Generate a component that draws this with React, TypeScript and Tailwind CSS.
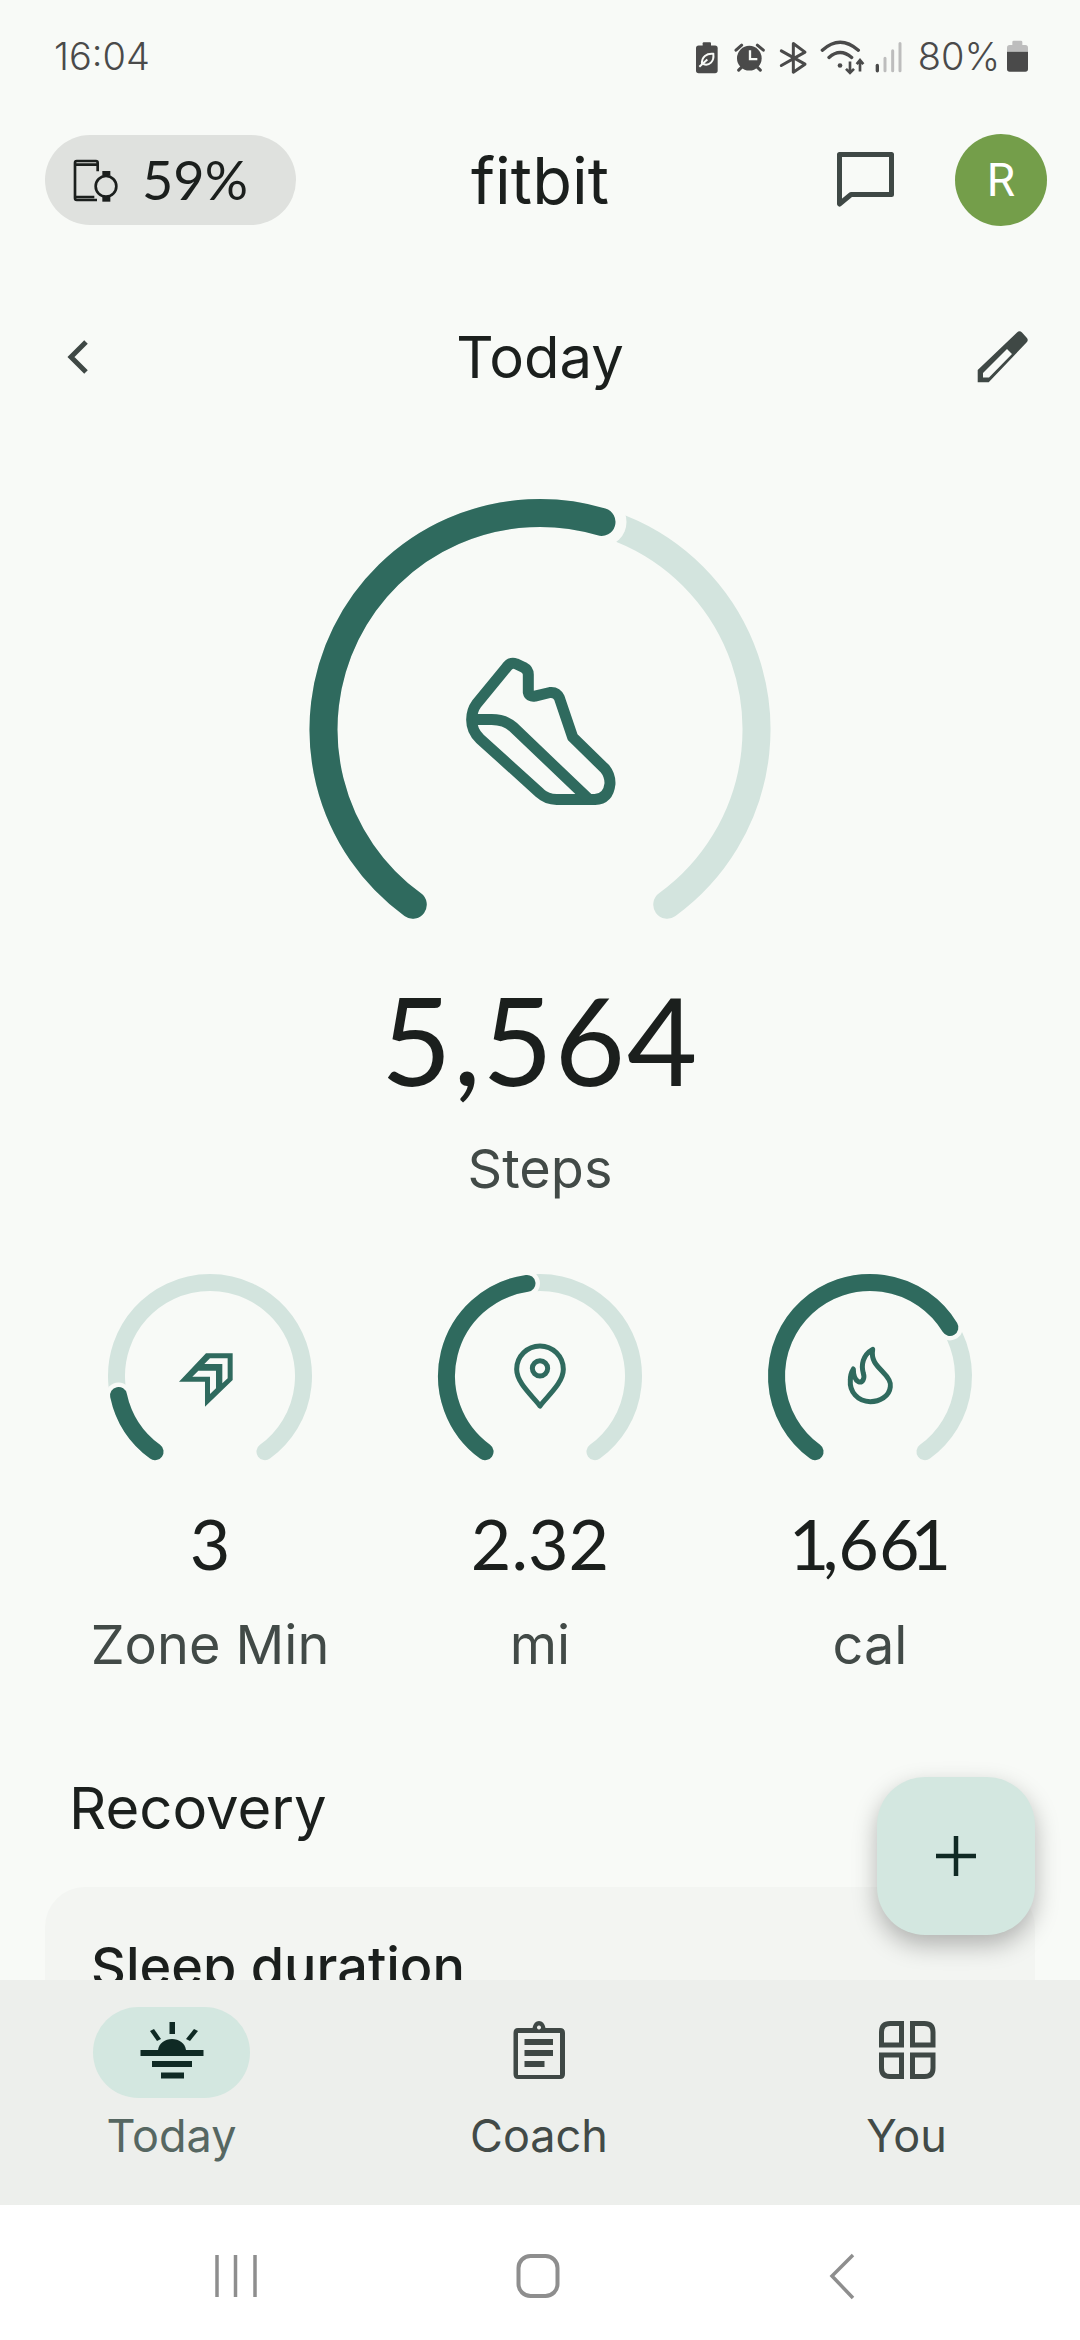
const DARK = "#2f6a5e";
const PALE = "#d3e4de";
const PAGE = "#f8faf7";

function polar(cx: number, cy: number, r: number, deg: number) {
  const a = (deg * Math.PI) / 180;
  return [cx + r * Math.sin(a), cy - r * Math.cos(a)];
}

function arc(cx: number, cy: number, r: number, from: number, to: number) {
  const [x1, y1] = polar(cx, cy, r, from);
  const [x2, y2] = polar(cx, cy, r, to);
  const sweep = ((to - from) % 360 + 360) % 360;
  const large = sweep > 180 ? 1 : 0;
  return `M${x1} ${y1}A${r} ${r} 0 ${large} 1 ${x2} ${y2}`;
}

// start is always 216deg clockwise from the top, track runs to 504 (144)
function Ring({ cx, cy, r, sw, end, gap, width, height, children }: {
  cx: number; cy: number; r: number; sw: number; end: number; gap: number; width: number; height: number; children: React.ReactNode;
}) {
  const [ex, ey] = polar(cx, cy, r, end);
  return (
    <svg width={width} height={height} viewBox={`0 0 ${width} ${height}`} fill="none" className="block mx-auto">
      <path d={arc(cx, cy, r, 216, 504)} stroke={PALE} strokeWidth={sw} strokeLinecap="round" />
      <circle cx={ex} cy={ey} r={sw / 2 + gap} fill={PAGE} />
      <path d={arc(cx, cy, r, 216, end)} stroke={DARK} strokeWidth={sw} strokeLinecap="round" />
      {children}
    </svg>
  );
}

function StatusIcons() {
  return (
    <svg width="207" height="37" viewBox="108 50 621 110" fill="none">
      <rect x="108" y="72" width="65" height="83" rx="8" fill="#4a4a4a" />
      <rect x="128" y="62" width="25" height="14" rx="3" fill="#4a4a4a" />
      <path d="M126 128C124 106 140 95 160 97C163 120 148 134 130 128M118 136L142 114" stroke={PAGE} strokeWidth="6" />
      <circle cx="268" cy="110" r="37" fill="#4a4a4a" />
      <path d="M270 86V113H292" stroke={PAGE} strokeWidth="7" />
      <path d="M228 86L245 71M292 71L310 86M236 146L246 136M301 146L291 136" stroke="#4a4a4a" strokeWidth="9" strokeLinecap="round" />
      <path d="M364 88L435 128L400 152V66L435 92L364 132" stroke="#4a4a4a" strokeWidth="9" strokeLinejoin="round" strokeLinecap="round" />
      <path d="M487 86Q540 38 595 86M507 108Q540 78 575 108" stroke="#4a4a4a" strokeWidth="10" strokeLinecap="round" />
      <circle cx="540" cy="132" r="7" fill="#4a4a4a" />
      <path d="M570 120V152M558 142L570 154L582 142M600 150V118M590 128L600 116L610 128" stroke="#4a4a4a" strokeWidth="8" />
      <path d="M652 132V148" stroke="#4a4a4a" strokeWidth="10" strokeLinecap="round" />
      <path d="M675 110V148M698 88V148M720 66V148" stroke="#bdbdbd" strokeWidth="9" strokeLinecap="round" />
    </svg>
  );
}

function Battery() {
  return (
    <svg width="21" height="32" viewBox="1042 60 63 96">
      <rect x="1058" y="62" width="30" height="20" rx="4" fill="#bdbdbd" />
      <path d="M1042 95V83a8 8 0 0 1 8-8h47a8 8 0 0 1 8 8v12z" fill="#bdbdbd" />
      <path d="M1042 95h63v52a8 8 0 0 1-8 8h-47a8 8 0 0 1-8-8z" fill="#4a4a4a" />
    </svg>
  );
}

function WatchIcon() {
  return (
    <svg width="50" height="45" viewBox="120 110 150 135" fill="none" stroke="#1b1f1d" strokeWidth="8">
      <path d="M200 150V124Q200 119 195 119H137Q132 119 132 124V231Q132 236 137 236H198M132 130H200M132 227H190" />
      <circle cx="225" cy="195" r="31" />
      <rect x="214" y="149" width="24" height="14" fill="#1b1f1d" stroke="none" />
      <rect x="214" y="226" width="24" height="15" fill="#1b1f1d" stroke="none" />
    </svg>
  );
}

function StatCol({ end, value, label, children }: { end: number; value: React.ReactNode; label: string; children: React.ReactNode }) {
  return (
    <div className="flex flex-col items-center">
      <Ring cx={110} cy={112} r={93.5} sw={17} end={end} gap={4.5} width={220} height={200}>
        {children}
      </Ring>
      <div className="mt-[39px] h-[80px] leading-[80px] font-['Lato',sans-serif] text-[70px] text-[#1b1f1d]">{value}</div>
      <div className="mt-[32px] h-[60px] leading-[60px] text-[54px] text-[#424a47]">{label}</div>
    </div>
  );
}

function NavItem({ label, active, children }: { label: string; active?: boolean; children: React.ReactNode }) {
  return (
    <div className="w-[157px] flex flex-col items-center">
      <div className={`w-[157px] h-[91px] pb-[6px] rounded-full flex items-center justify-center ${active ? "bg-[#d3e7e0]" : ""}`}>
        {children}
      </div>
      <div className={`mt-[8px] h-[60px] leading-[60px] text-[45px] ${active ? "text-[#566762]" : "text-[#424a47]"}`}>{label}</div>
    </div>
  );
}

export default function App() {
  return (
    <div className="relative w-full h-[2340px] overflow-hidden flex flex-col bg-white font-['Inter',sans-serif]">
      <div className="h-[1980px] overflow-hidden bg-[#f8faf7]">
        {/* status bar */}
        <div className="h-[112px] flex items-center justify-between pl-[54px] pr-[52px] font-light text-[38px] text-[#4a4a4a]">
          <span>16:04</span>
          <div className="flex items-center">
            <StatusIcons />
            <span className="ml-[15px] mr-[7px]">80%</span>
            <Battery />
          </div>
        </div>

        {/* top bar */}
        <div className="mt-[22px] h-[90px] grid grid-cols-[1fr_auto_1fr] items-center px-[33px]">
          <div className="pl-[12px]">
            <div className="w-[251px] h-[90px] rounded-full bg-[#dfe1de] flex items-center pl-[26px] text-[#1b1f1d]">
              <WatchIcon />
              <span className="ml-[21px] font-['Lato',sans-serif] text-[54px] leading-none">59%</span>
            </div>
          </div>
          <div className="text-[65px] leading-none text-[#1b1f1d]">fitbit</div>
          <div className="flex items-center justify-end">
            <svg width="62" height="60" viewBox="0 0 62 60" fill="none">
              <path d="M4.5 4.5H56.5V44.5H16L4.5 54Z" stroke="#3f4845" strokeWidth="5" strokeLinejoin="round" />
            </svg>
            <div className="ml-[58px] w-[92px] h-[92px] rounded-full bg-[#749e4a] flex items-center justify-center font-['Roboto',sans-serif] text-[46px] text-white">
              R
            </div>
          </div>
        </div>

        {/* title row */}
        <div className="mt-[83px] h-[100px] grid grid-cols-[1fr_auto_1fr] items-center px-[50px]">
          <div className="pl-[16px]">
            <svg width="24" height="36" viewBox="0 0 24 36" fill="none">
              <path d="M20 3L5 18L20 33" stroke="#3f4845" strokeWidth="5" />
            </svg>
          </div>
          <div className="text-[58px] leading-none text-[#1b1f1d]">Today</div>
          <div className="flex justify-end">
            <svg width="54" height="56" viewBox="0 0 54 56">
              <path
                fillRule="evenodd"
                d="M1.7 53.3V41L41 3.5Q43.5 1 46 3.5L50.5 8.5Q53 11 50.5 13.5L12.7 53.3ZM7 44V48.5H13L36 25L31 20Z"
                fill="#3f4845"
              />
            </svg>
          </div>
        </div>

        {/* steps */}
        <div className="mt-[83px]">
          <Ring cx={240} cy={239.5} r={216.5} sw={28} end={16.5} gap={11} width={480} height={440}>
            <g transform="translate(-20 -19.5) scale(0.3333)" stroke={DARK} strokeWidth="33" strokeLinejoin="round">
              <path d="M680 590Q692 574 708 580L730 590Q745 598 745 612V665Q748 680 765 677L810 666Q830 664 838 682L878 800L975 895Q991 915 990 940Q985 985 945 987H830Q800 987 780 968L600 805Q575 782 575 748Q575 720 590 700Z" />
              <path d="M578 747H635Q675 747 700 770L925 985" />
            </g>
          </Ring>
          <div className="mt-[49px] h-[120px] leading-[120px] text-center font-['Lato',sans-serif] text-[122px] tracking-[1.5px] text-[#1b1f1d]">5,564</div>
          <div className="mt-[40px] h-[60px] leading-[60px] text-center text-[54px] text-[#424a47]">Steps</div>
        </div>

        {/* small stats */}
        <div className="mt-[65px] px-[45px] grid grid-cols-3">
          <StatCol end={258} value="3" label="Zone Min">
            <g transform="translate(60 56) scale(0.3333)" fill={DARK}>
              <path
                fillRule="evenodd"
                d="M138 100H218V180L135 260V185H57ZM150 115L133 132H187V190L203 175V115ZM115 152L97 170H150V222L168 205V152Z"
              />
            </g>
          </StatCol>
          <StatCol end={352} value="2.32" label="mi">
            <g transform="translate(60 56) scale(0.3333)" fill="none" stroke={DARK} strokeWidth="15" strokeLinejoin="round">
              <path d="M150 258C130 230 80 190 80 148A70 70 0 0 1 220 148C220 190 170 230 150 258Z" />
              <circle cx="150" cy="145" r="23" />
            </g>
          </StatCol>
          <StatCol
            end={58.7}
            value={
              <>
                <span className="tracking-[-7px]">1</span>,6<span className="tracking-[-9px]">6</span>1
              </>
            }
            label="cal"
          >
            <g transform="translate(61 56) scale(0.3333)" fill="none" stroke={DARK} strokeWidth="15" strokeLinejoin="round">
              <path d="M155 88C150 120 165 135 185 155C205 175 210 190 208 200C205 230 175 245 148 245C110 245 85 215 88 180C88 165 92 155 97 147C97 165 100 178 112 185C125 190 132 175 127 160C120 135 125 105 155 88Z" />
            </g>
          </StatCol>
        </div>

        {/* recovery */}
        <div className="mt-[98px] ml-[69px] h-[70px] leading-[70px] text-[58px] text-[#1b1f1d]">Recovery</div>
        <div className="mt-[44px] mx-[45px] h-[300px] rounded-[40px] bg-[#f3f5f2] pt-[50px] pl-[46px]">
          <div className="h-[60px] leading-[60px] text-[54px] font-medium text-[#1b1f1d]">Sleep duration</div>
        </div>
      </div>

      {/* add button */}
      <div className="absolute left-[877px] top-[1777px] w-[158px] h-[158px] rounded-[48px] bg-[#d3e7e0] shadow-[0_10px_24px_rgba(0,0,0,0.28)] flex items-center justify-center">
        <svg width="42" height="42" viewBox="0 0 42 42">
          <path d="M21 1V41M1 21H41" stroke="#0f2a24" strokeWidth="4.5" />
        </svg>
      </div>

      {/* bottom nav */}
      <div className="h-[225px] bg-[#edefec] flex justify-between pl-[93px] pr-[95px] pt-[27px]">
        <NavItem label="Today" active>
          <svg width="64" height="58" viewBox="140 2020 64 58" fill="#0f2a24">
            <rect x="169.5" y="2021" width="5.5" height="12" />
            <path d="M150 2030L154 2028L161 2038L157 2040Z" />
            <path d="M194 2028L198 2030L190 2040L186 2038Z" />
            <path d="M158 2049C159 2042 165 2038 172 2038C179 2038 185 2042 186 2049Z" />
            <rect x="140.5" y="2049" width="63" height="6" />
            <rect x="152" y="2060" width="40" height="6" />
            <rect x="161" y="2071.5" width="23" height="6" />
          </svg>
        </NavItem>
        <NavItem label="Coach">
          <svg width="52" height="60" viewBox="513 2019 52 60">
            <path
              fillRule="evenodd"
              d="M518 2027H532.5Q534 2020 539 2020Q544 2020 545.5 2027H560Q565 2027 565 2032V2073Q565 2078 560 2078H518Q513.5 2078 513.5 2073V2032Q513.5 2027 518 2027ZM518 2032V2074H560V2032ZM539 2024.5a2 2 0 1 0 .01 0Z"
              fill="#3f4845"
            />
            <rect x="524.5" y="2038" width="28.5" height="6" fill="#3f4845" />
            <rect x="524.5" y="2049" width="28.5" height="6" fill="#3f4845" />
            <rect x="524.5" y="2060" width="20" height="6" fill="#3f4845" />
          </svg>
        </NavItem>
        <NavItem label="You">
          <svg width="58" height="60" viewBox="878 2022 58 60" fill="none" stroke="#3f4845" strokeWidth="5">
            <path d="M881.5 2047V2034Q881.5 2025.5 890 2025.5H901.5V2047Z" />
            <path d="M912.5 2025.5H924.5Q933 2025.5 933 2034V2047H912.5Z" />
            <path d="M881.5 2057H901.5V2078.5H890Q881.5 2078.5 881.5 2070Z" />
            <path d="M912.5 2057H933V2070Q933 2078.5 924.5 2078.5H912.5Z" />
          </svg>
        </NavItem>
      </div>

      {/* system nav */}
      <div className="flex-1 bg-white flex items-center relative">
        <svg width="1080" height="135" viewBox="0 2205 1080 135" fill="none" stroke="#8e8e8e">
          <path d="M217 2255V2297M235.5 2255V2297M255 2255V2297" strokeWidth="3.5" />
          <rect x="518.5" y="2256" width="39" height="40" rx="12" strokeWidth="4" />
          <path d="M853 2255L832 2276L853 2298" strokeWidth="3.5" />
        </svg>
      </div>
    </div>
  );
}
